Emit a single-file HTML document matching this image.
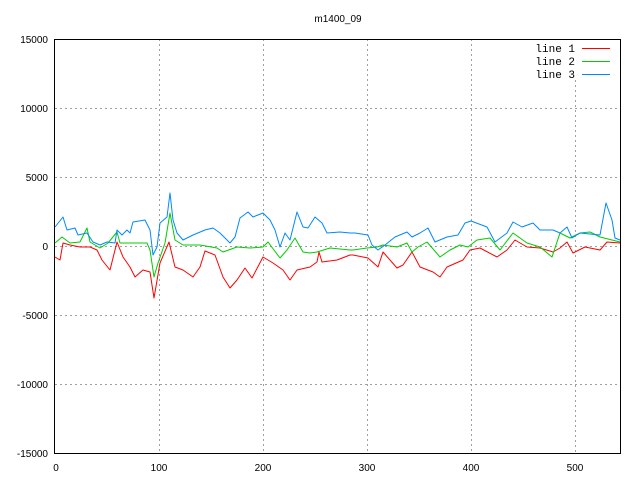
<!DOCTYPE html>
<html><head><meta charset="utf-8"><style>
html,body{margin:0;padding:0;background:#fff;width:640px;height:480px;overflow:hidden}
svg{display:block}
.t{font-family:"Liberation Sans","DejaVu Sans",sans-serif;font-size:10px;fill:#000}
.m{font-family:"Liberation Mono",monospace;font-size:11px;fill:#000}
</style></head><body>
<svg width="640" height="480" viewBox="0 0 640 480" xmlns="http://www.w3.org/2000/svg">
<rect width="640" height="480" fill="#fff"/>
<g stroke="#a0a0a0" stroke-width="1" stroke-dasharray="2,3">
<line x1="159.5" y1="39" x2="159.5" y2="453"/>
<line x1="263.5" y1="39" x2="263.5" y2="453"/>
<line x1="367.5" y1="39" x2="367.5" y2="453"/>
<line x1="471.5" y1="39" x2="471.5" y2="453"/>
<line x1="575.5" y1="80" x2="575.5" y2="453"/>
<line x1="55" y1="108.5" x2="620" y2="108.5"/>
<line x1="55" y1="177.5" x2="620" y2="177.5"/>
<line x1="55" y1="246.5" x2="620" y2="246.5"/>
<line x1="55" y1="315.5" x2="620" y2="315.5"/>
<line x1="55" y1="384.5" x2="620" y2="384.5"/>
</g>
<rect x="54.5" y="39.5" width="566" height="414" fill="none" stroke="#000" stroke-width="1"/>
<g class="t" text-anchor="end">
<text x="48" y="43">15000</text>
<text x="48" y="112">10000</text>
<text x="48" y="181">5000</text>
<text x="48" y="250">0</text>
<text x="48" y="319">-5000</text>
<text x="48" y="388">-10000</text>
<text x="48" y="457">-15000</text>
</g>
<g class="t" text-anchor="middle">
<text x="56" y="471">0</text>
<text x="159" y="471">100</text>
<text x="263" y="471">200</text>
<text x="367" y="471">300</text>
<text x="471" y="471">400</text>
<text x="575" y="471">500</text>
<text x="338" y="22">m1400_09</text>
</g>
<g class="m" text-anchor="end">
<text x="575" y="52">line 1</text>
<text x="575" y="65">line 2</text>
<text x="575" y="78">line 3</text>
</g>
<line x1="582" y1="48.5" x2="610" y2="48.5" stroke="#f00"/>
<line x1="582" y1="61.5" x2="610" y2="61.5" stroke="#0c0"/>
<line x1="582" y1="74.5" x2="610" y2="74.5" stroke="#08f"/>
<g fill="none" stroke-width="1" stroke-linejoin="round">
<polyline stroke="#f00" points="55,257 60,260 63,243 70,245 80,247 90,247 97,250 102,260 110,270 117,242 123,257 130,267 135,277 143,270 150,272 154,298 160,263 169,242 175,267 183,270 193,277 200,267 205,251 215,255 223,277 230,288 237,280 245,268 252,278 263,257 273,263 283,270 290,280 297,270 310,267 317,262 319,252 322,262 337,260 350,255 353,255 368,258 378,267 383,252 397,268 403,265 412,252 420,267 433,272 440,277 447,267 463,260 470,250 480,248 497,257 507,250 515,240 527,247 540,248 553,252 560,248 567,242 573,253 585,247 600,250 607,242 620,243"/>
<polyline stroke="#0c0" points="55,243 62,237 70,243 80,242 87,228 90,242 100,248 108,243 117,232 120,243 147,243 150,250 154,277 158,263 165,243 170,213 175,240 183,245 200,245 217,248 223,252 237,247 250,248 263,247 268,242 280,258 287,250 295,238 303,252 310,253 317,252 330,248 350,250 353,250 367,248 377,247 383,245 397,247 407,243 412,252 418,247 427,242 440,257 450,250 460,245 468,247 477,240 490,238 500,250 513,233 527,243 540,247 552,257 560,233 570,238 580,233 590,232 600,237 620,242"/>
<polyline stroke="#08f" points="55,227 63,217 67,230 75,228 78,235 87,233 93,242 100,245 107,242 115,243 117,230 122,235 127,230 130,233 133,222 145,220 150,230 153,255 157,247 160,223 167,217 170,193 173,220 177,233 183,240 193,235 205,230 213,228 220,233 230,243 235,237 240,218 248,212 253,217 263,213 270,220 275,230 280,247 285,233 290,240 297,212 303,227 308,228 315,217 322,223 327,233 340,232 350,233 355,233 368,235 372,245 378,250 385,245 395,237 407,232 412,237 420,233 428,228 435,242 447,237 458,235 465,223 471,221 487,227 495,242 507,233 513,222 522,227 533,223 540,230 553,230 560,233 567,227 572,238 580,233 600,235 606,203 612,220 615,238 620,240"/>
</g>
</svg>
</body></html>
